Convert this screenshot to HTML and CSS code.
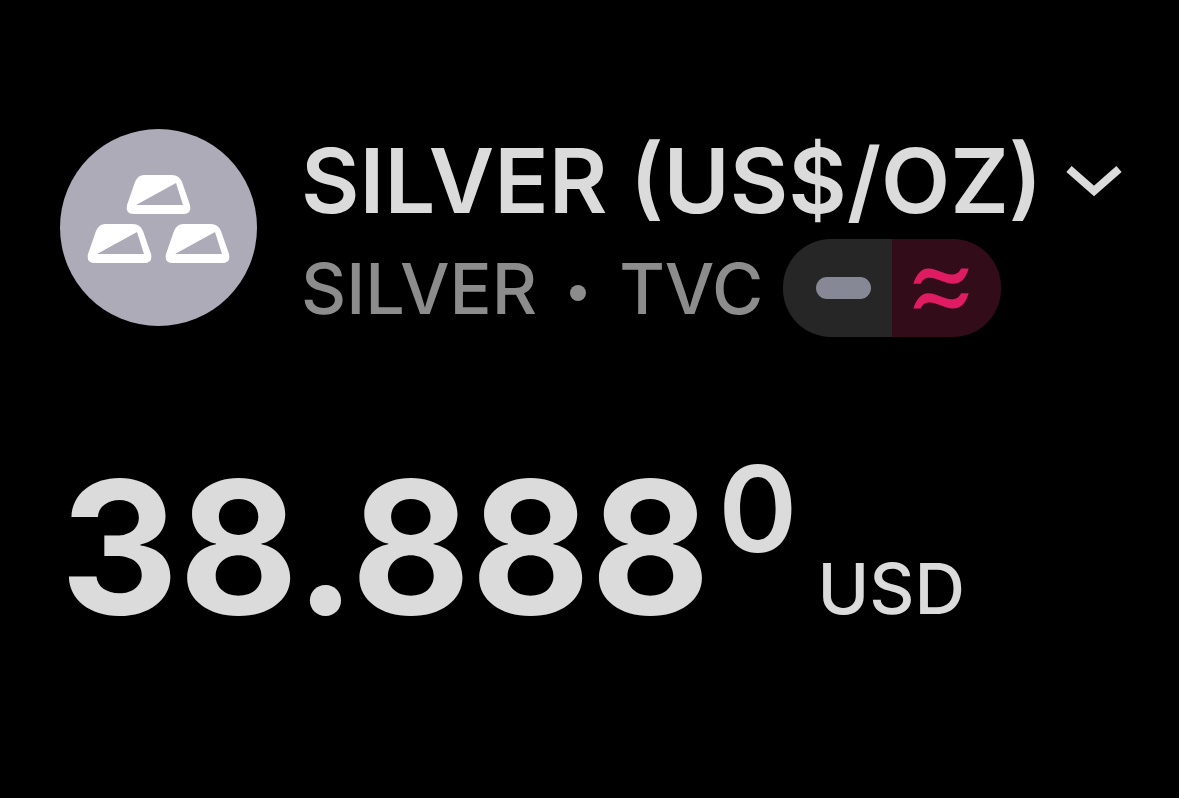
FILE: index.html
```html
<!DOCTYPE html>
<html lang="en">

<head>
    <meta charset="UTF-8">
    <meta name="viewport" content="width=device-width, initial-scale=1.0">
    <title>Silver (US$/OZ)</title>
    <link rel="stylesheet" href="styles.css">
</head>

<body>
    <main class="quote">
        <header class="symbol">
            <svg class="logo" viewBox="0 0 197 197" aria-hidden="true">
                <defs>
                    <path id="bar" fill-rule="evenodd" d="M84 46 H112 Q119 46 122 53 L130 76 Q132 85 123 85 H74 Q65 85 67 76 L75 53 Q78 46 84 46 Z M76 76 H123 L116 54 Z" />
                </defs>
                <circle cx="98.5" cy="98.5" r="98.5" fill="#aeabb9" />
                <g fill="#fff">
                    <use href="#bar" />
                    <use href="#bar" x="-39" y="49" />
                    <use href="#bar" x="39" y="49" />
                </g>
            </svg>
            <div class="names">
                <div class="title-row">
                    <h1 class="title">SILVER (US$/OZ)</h1>
                    <button class="expand" type="button" aria-label="Change symbol">
                        <svg class="chevron" viewBox="0 0 56 32" aria-hidden="true">
                            <path d="M3 4 L28 26 L53 4" fill="none" stroke="#dbdbdb" stroke-width="8" />
                        </svg>
                    </button>
                </div>
                <div class="detail-row">
                    <span class="ticker">SILVER</span>
                    <span class="dot"></span>
                    <span class="exchange">TVC</span>
                    <span class="status">
                        <span class="market"><span class="dash"></span></span>
                        <span class="delayed">
                            <svg class="waves" viewBox="0 0 168 128" aria-hidden="true">
                                <path d="M1 50 C10 22 24 4 46 4 C72 4 92 22 116 22 C132 22 140 14 144 4 H167 C158 34 144 50 120 50 C94 50 74 32 50 32 C36 32 28 38 23 50 Z" />
                                <path d="M1 124 C10 96 24 78 46 78 C72 78 92 96 116 96 C132 96 140 88 144 78 H167 C158 108 144 124 120 124 C94 124 74 106 50 106 C36 106 28 112 23 124 Z" />
                            </svg>
                        </span>
                    </span>
                </div>
            </div>
        </header>
        <div class="price">
            <span class="value">38.888<sup class="fraction">0</sup></span>
            <span class="currency">USD</span>
        </div>
    </main>
</body>

</html>
```

FILE: styles.css
```css
body {
    margin: 0;
    background-color: #000;
    color: #dbdbdb;
    font-family: Inter, sans-serif;
}

.quote {
    padding: 129px 56px 0 60px;
}

.symbol {
    display: flex;
    gap: 44px;
}

.logo {
    width: 197px;
    height: 197px;
    flex: none;
}

.title-row {
    display: flex;
    align-items: center;
    gap: 24px;
    height: 104px;
}

.title {
    margin: 0;
    font-size: 90px;
    font-weight: 600;
    line-height: 104px;
    white-space: nowrap;
}

.expand {
    display: flex;
    padding: 0;
    border: 0;
    background: none;
    cursor: pointer;
}

.chevron {
    width: 56px;
    height: 32px;
}

.detail-row {
    display: flex;
    align-items: center;
    height: 98px;
    margin-top: 6px;
    color: #8c8c8c;
    font-size: 70px;
    font-weight: 500;
}

.dot {
    width: 16px;
    height: 16px;
    margin: 10px 33px 0;
    border-radius: 50%;
    background-color: #8c8c8c;
}

.status {
    display: flex;
    width: 218px;
    height: 98px;
    margin-left: 20px;
    border-radius: 48px;
    overflow: hidden;
}

.market,
.delayed {
    display: flex;
    align-items: center;
    justify-content: center;
    flex: 1;
    box-sizing: border-box;
}

.market {
    padding-left: 12px;
    background-color: #262626;
}

.delayed {
    padding-right: 12px;
    background-color: #330c19;
}

.dash {
    width: 55px;
    height: 22px;
    border-radius: 11px;
    background-color: #868896;
}

.waves {
    width: 56px;
    height: 43px;
    fill: #df1b62;
}

.price {
    display: flex;
    align-items: baseline;
    margin-top: 110px;
    line-height: 200px;
}

.value {
    font-size: 184px;
    font-weight: 700;
}

.fraction {
    margin-left: 8px;
    font-size: 120px;
    font-weight: 600;
    line-height: 0;
    vertical-align: 62px;
}

.currency {
    margin-left: 20px;
    font-size: 70px;
    font-weight: 500;
}
```
